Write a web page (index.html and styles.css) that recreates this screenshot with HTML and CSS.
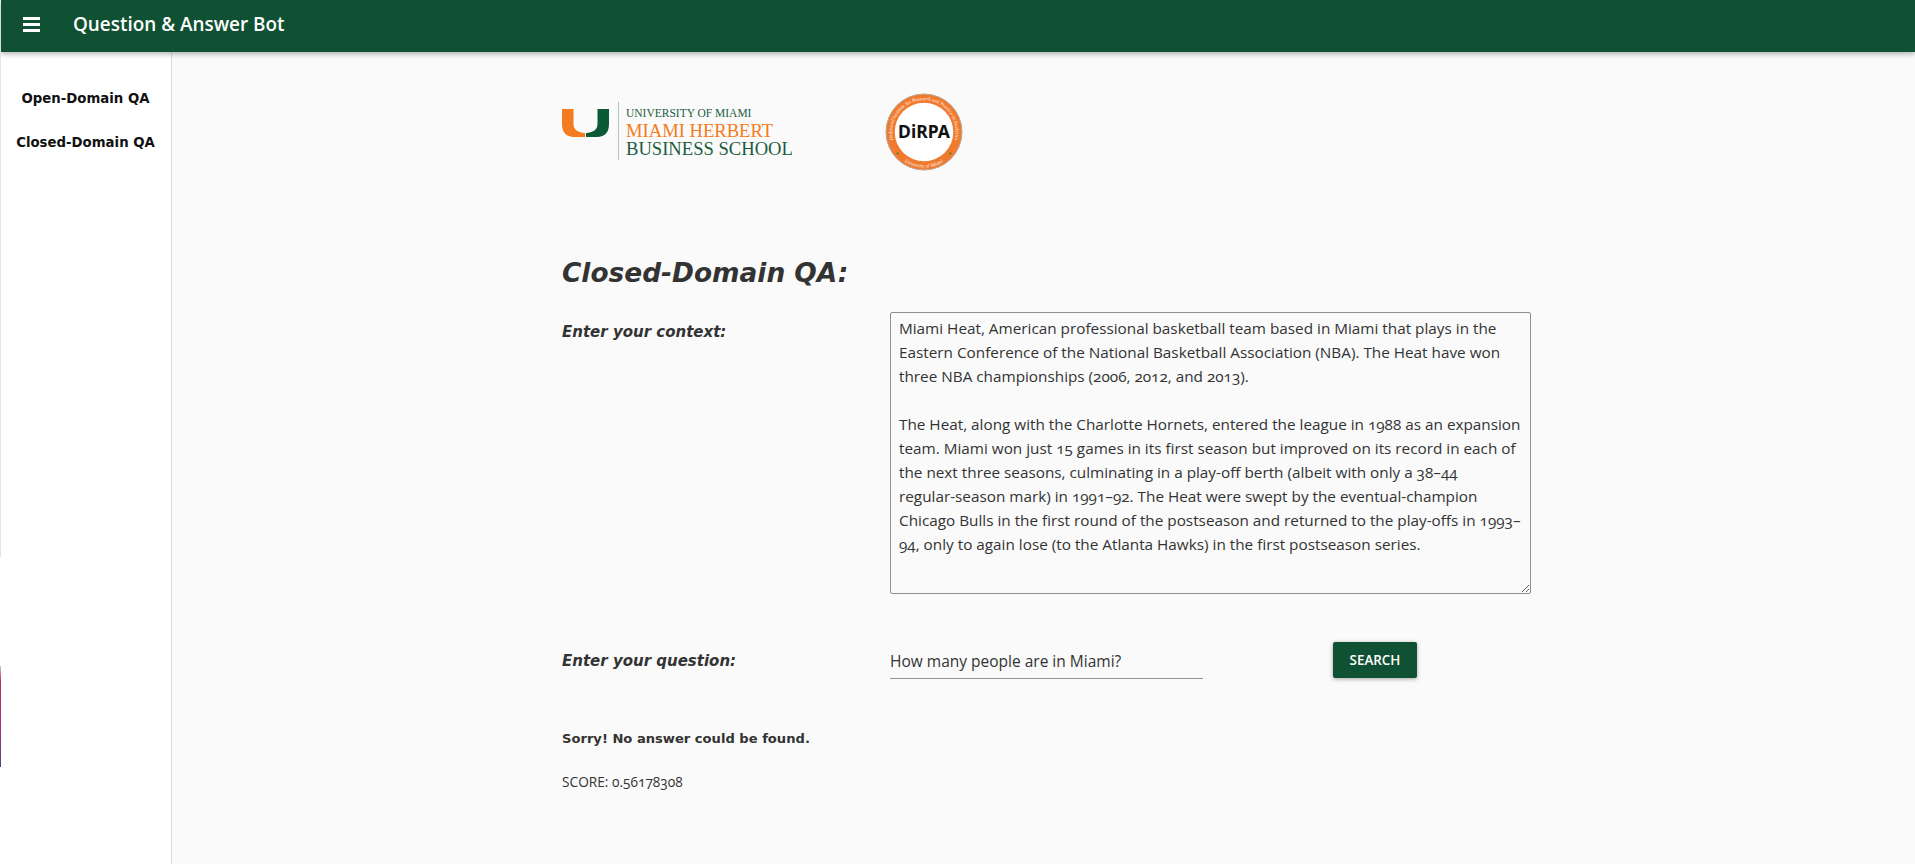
FILE: index.html
```html
<!DOCTYPE html>
<html lang="en">
<head>
  <meta charset="UTF-8" />
  <title>Question &amp; Answer Bot</title>
  <link rel="stylesheet" href="styles.css">
</head>
<body>

  <div class="edge-gray"></div>
  <div class="edge-color"></div>

  <header class="topbar">
    <svg class="menu-icon" viewBox="0 0 17 15" width="17" height="15">
      <rect x="0" y="0" width="17" height="3" fill="#fff"/>
      <rect x="0" y="6" width="17" height="3" fill="#fff"/>
      <rect x="0" y="12" width="17" height="3" fill="#fff"/>
    </svg>
    <h1>Question &amp; Answer Bot</h1>
  </header>

  <div class="layout">
    <nav class="sidebar">
      <a href="#">Open-Domain QA</a>
      <a href="#">Closed-Domain QA</a>
    </nav>

    <main class="content">
      <div class="logos">
        <div class="um-logo">
          <svg class="um-mark" viewBox="0 0 47 28" width="47" height="28">
            <path d="M0 0H11.5V15C11.5 20 15 23.5 23 24V28H12C4 28 0 23 0 15Z" fill="#f47b20"/>
            <path d="M47 0H35.5V15C35.5 20 32 23.5 24 24V28H35C43 28 47 23 47 15Z" fill="#0b5a35"/>
          </svg>
          <div class="um-text">
            <span class="um-small">UNIVERSITY OF MIAMI</span>
            <span class="um-orange">MIAMI HERBERT</span>
            <span class="um-green">BUSINESS SCHOOL</span>
          </div>
        </div>
        <svg class="dirpa" viewBox="0 0 80 80" width="78" height="78">
          <defs>
            <path id="arcTop" d="M9.9 52.2A32.5 32.5 0 1 1 70.1 52.2"/>
            <path id="arcBottom" d="M14.2 65.8A36.5 36.5 0 0 0 65.8 65.8"/>
          </defs>
          <circle cx="40" cy="40" r="39" fill="#f07a2e" stroke="#b9a999" stroke-width="1"/>
          <circle cx="40" cy="40" r="30" fill="#fff"/>
          <text class="dirpa-ring"><textPath href="#arcTop" startOffset="50%" text-anchor="middle">Dedicated Institute for Research and Practice in Analytics</textPath></text>
          <text class="dirpa-ring"><textPath href="#arcBottom" startOffset="50%" text-anchor="middle">University of Miami</textPath></text>
          <circle cx="13" cy="62" r="1" fill="#2f7d4a"/>
          <circle cx="67" cy="62" r="1" fill="#2f7d4a"/>
          <text class="dirpa-name" x="40" y="46" text-anchor="middle">DiRPA</text>
        </svg>
      </div>

      <h2 class="page-title">Closed-Domain QA:</h2>

      <div class="form-row context-row">
        <label class="field-label">Enter your context:</label>
        <textarea class="context-box" wrap="off">Miami Heat, American professional basketball team based in Miami that plays in the
Eastern Conference of the National Basketball Association (NBA). The Heat have won
three NBA championships (2006, 2012, and 2013).

The Heat, along with the Charlotte Hornets, entered the league in 1988 as an expansion
team. Miami won just 15 games in its first season but improved on its record in each of
the next three seasons, culminating in a play-off berth (albeit with only a 38–44
regular-season mark) in 1991–92. The Heat were swept by the eventual-champion
Chicago Bulls in the first round of the postseason and returned to the play-offs in 1993–
94, only to again lose (to the Atlanta Hawks) in the first postseason series.</textarea>
      </div>

      <div class="form-row question-row">
        <label class="field-label">Enter your question:</label>
        <input class="question-input" type="text" value="How many people are in Miami?">
        <button class="search-btn">SEARCH</button>
      </div>

      <p class="answer">Sorry! No answer could be found.</p>
      <p class="score">SCORE: 0.56178308</p>
    </main>
  </div>

</body>
</html>
```

FILE: styles.css
```css
* {
  box-sizing: border-box;
}

body {
  margin: 0;
  height: 864px;
  overflow: hidden;
  background: #fafafa;
  color: #333;
  font-family: "Open Sans", sans-serif;
  font-variant-numeric: oldstyle-nums;
}

.edge-gray {
  position: absolute;
  left: 0;
  top: 52px;
  width: 1px;
  height: 505px;
  background: #e4e4e4;
  z-index: 2;
}

.edge-color {
  position: absolute;
  left: 0;
  top: 666px;
  width: 1px;
  height: 101px;
  background: linear-gradient(#c9c9c9, #c2286a 15%, #a8307f 60%, #55418f);
  z-index: 2;
}

.topbar {
  height: 52px;
  margin-left: 1px;
  padding-bottom: 3px;
  display: flex;
  align-items: center;
  background: #0f5132;
  box-shadow: 0 2px 5px rgba(0,0,0,0.3);
  position: relative;
  z-index: 1;
}

.menu-icon {
  margin-left: 22px;
}

.topbar h1 {
  margin: 0 0 2px 33px;
  color: #fff;
  font-size: 18.9px;
  font-weight: 600;
}

.layout {
  display: flex;
  height: 812px;
}

.sidebar {
  width: 172px;
  flex-shrink: 0;
  background: #fff;
  border-right: 1px solid #ddd;
  padding-top: 36px;
  display: flex;
  flex-direction: column;
  gap: 22px;
  text-align: center;
}

.sidebar a {
  color: #111;
  font-family: "DejaVu Sans", sans-serif;
  font-size: 13.3px;
  font-weight: 700;
  line-height: 22px;
  text-decoration: none;
}

.content {
  padding-left: 390px;
  flex: 1;
}

.logos {
  display: flex;
  padding-top: 40px;
  height: 132px;
}

.um-logo {
  width: 323px;
  display: flex;
  align-items: flex-start;
}

.um-mark {
  margin-top: 17px;
}

.um-text {
  margin-left: 9px;
  height: 58px;
  margin-top: 10px;
  border-left: 1px solid #b5c4bb;
  padding-left: 7px;
  display: flex;
  flex-direction: column;
  font-family: "Liberation Serif", serif;
  white-space: nowrap;
}

.um-small {
  font-size: 11.5px;
  line-height: 14px;
  margin-top: 4px;
  color: #1c5c3e;
}

.um-orange {
  font-size: 18.6px;
  line-height: 18px;
  margin-top: 2px;
  color: #f47b20;
}

.um-green {
  font-size: 18.6px;
  line-height: 18px;
  color: #1c5c3e;
}

.dirpa {
  margin-top: 1px;
}

.dirpa-ring {
  font-family: "Liberation Serif", serif;
  font-size: 5.1px;
  fill: #fff1e6;
}

.dirpa-name {
  font-family: "Noto Sans", sans-serif;
  font-size: 18px;
  font-weight: 700;
  fill: #111;
}

.page-title {
  margin: 0;
  padding-top: 70px;
  font-family: "DejaVu Sans", sans-serif;
  font-size: 26.4px;
  font-style: italic;
  font-weight: 700;
  line-height: 38px;
  color: #333;
}

.form-row {
  display: flex;
  align-items: flex-start;
}

.field-label {
  width: 328px;
  flex-shrink: 0;
  font-family: "DejaVu Sans", sans-serif;
  font-size: 15px;
  font-style: italic;
  font-weight: 700;
  color: #333;
}

.context-row {
  margin-top: 20px;
}

.context-row .field-label {
  padding-top: 11px;
}

.context-box {
  width: 641px;
  height: 282px;
  padding: 3px 8px;
  background: transparent;
  border: 1px solid #8f8f8f;
  border-radius: 2px;
  color: #333;
  font-family: "Open Sans", sans-serif;
  font-size: 15.3px;
  font-variant-numeric: oldstyle-nums;
  line-height: 24px;
  overflow: hidden;
}

.question-row {
  margin-top: 48px;
}

.question-row .field-label {
  padding-top: 10px;
}

.question-input {
  width: 313px;
  height: 37px;
  padding: 2px 0 0;
  background: transparent;
  border: none;
  border-bottom: 1px solid #949494;
  color: #333;
  font-family: "Open Sans", sans-serif;
  font-size: 15.5px;
  outline: none;
}

.search-btn {
  margin-left: 130px;
  width: 84px;
  height: 36px;
  padding-bottom: 2px;
  border: none;
  border-radius: 2px;
  background: #0f5132;
  color: #fff;
  font-family: "Open Sans", sans-serif;
  font-size: 13.4px;
  font-weight: 600;
  box-shadow: 0 1px 4px rgba(0,0,0,0.35);
}

.answer {
  margin: 49px 0 0;
  font-family: "DejaVu Sans", sans-serif;
  font-size: 13.1px;
  font-weight: 700;
  line-height: 22px;
  color: #333;
}

.score {
  margin: 23px 0 0;
  font-size: 13.7px;
  line-height: 18px;
  color: #333;
}
```
